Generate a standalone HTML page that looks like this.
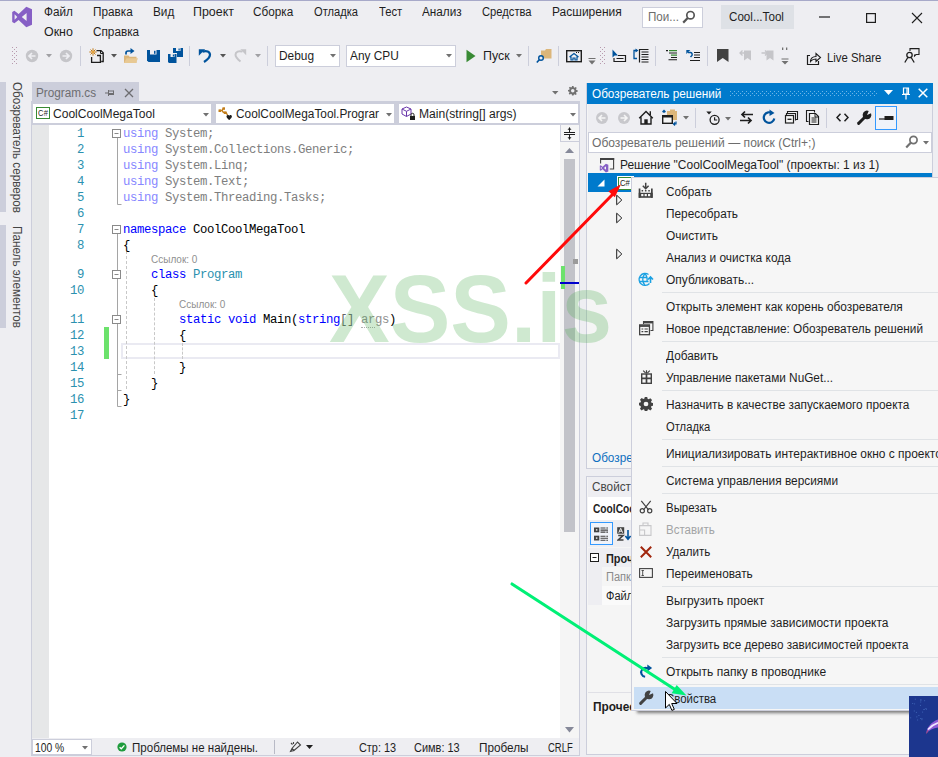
<!DOCTYPE html>
<html><head><meta charset="utf-8">
<style>
html,body{margin:0;padding:0;}
body{width:938px;height:757px;overflow:hidden;background:#EEEEF2;position:relative;font-family:"Liberation Sans",sans-serif;font-size:12px;color:#1E1E1E;}
.a{position:absolute;}
.t{position:absolute;white-space:nowrap;line-height:16px;transform-origin:0 50%;transform:scaleX(var(--s,.94));}
.mn{font-size:12.5px;color:#1E1E1E;}
.code{font-family:"Liberation Mono",monospace;font-size:12.300px;letter-spacing:-0.380px;line-height:16px;white-space:pre;position:absolute;color:#000;margin-top:1px;}
.ln{font-family:"Liberation Mono",monospace;font-size:12.300px;letter-spacing:-0.380px;line-height:16px;position:absolute;color:#2B91AF;width:30px;text-align:right;left:54px;margin-top:1px;}
.fkw{color:#8787FF}.fid{color:#7E7E7E}.kw{color:#0000FF}.ty{color:#2B91AF}.dim{color:#8F8F8F}
.cl{position:absolute;font-size:10px;color:#8F8F8F;white-space:nowrap;line-height:12px;}
.mi{position:absolute;left:666px;white-space:nowrap;font-size:12.5px;line-height:16px;color:#1E1E1E;transform-origin:0 50%;transform:scaleX(var(--s,.937));margin-top:1px;}
.sep{position:absolute;left:662px;width:276px;height:1px;background:#E0E3E6;}
.vsep{position:absolute;width:1px;background:#CCCEDB;}
</style></head><body>

<!-- ===== window top border ===== -->
<div class="a" style="left:0;top:0;width:938px;height:1px;background:#A7A9C9"></div>

<!-- ===== MENU ===== -->
<div id="menu">
<svg class="a" style="left:11px;top:6px" width="22" height="22" viewBox="0 0 22 22"><path fill="#865FC5" d="M15.300 0.800 21 3.200v15.600l-5.700 2.400-7.700-7.300-4.200 3.300-2.200-1.100V5.900l2.200-1.100 4.200 3.300zM3.600 8.300v5.400L6.300 11zm12 -1.300L10.800 11l4.800 4z"/></svg>
<span class="t mn" style="left:44px;top:4px">Файл</span>
<span class="t mn" style="left:93px;top:4px">Правка</span>
<span class="t mn" style="left:153px;top:4px">Вид</span>
<span class="t mn" style="left:193px;top:4px;--s:0.995">Проект</span>
<span class="t mn" style="left:253px;top:4px">Сборка</span>
<span class="t mn" style="left:314px;top:4px;--s:0.892">Отладка</span>
<span class="t mn" style="left:379px;top:4px;--s:0.9">Тест</span>
<span class="t mn" style="left:422px;top:4px">Анализ</span>
<span class="t mn" style="left:482px;top:4px;--s:0.895">Средства</span>
<span class="t mn" style="left:552px;top:4px;--s:0.96">Расширения</span>
<span class="t mn" style="left:44px;top:24px;--s:0.995">Окно</span>
<span class="t mn" style="left:93px;top:24px">Справка</span>
</div>

<!-- ===== TOOLBAR placeholder ===== -->
<div id="toolbar">
<!-- title area -->
<div class="a" style="left:642px;top:7px;width:61px;height:21px;background:#fff;border:1px solid #CCCEDB;box-sizing:border-box"></div>
<span class="t" style="left:648px;top:9px;font-size:12.500px;color:#6D6D6D;--s:.93" id="srch">Пои...</span>
<svg class="a" style="left:682px;top:10px" width="14" height="14" viewBox="0 0 14 14"><circle cx="8.500" cy="5.200" r="3.700" stroke="#555" stroke-width="1.700" fill="none"/><path d="M6 7.800 1.200 12.600" stroke="#555" stroke-width="2.200"/></svg>
<div class="a" style="left:721px;top:5px;width:73px;height:24px;background:#DEE1E6"></div>
<span class="t" style="left:729px;top:9px;font-size:12.500px;--s:.93" id="badge">Cool...Tool</span>
<svg class="a" style="left:819px;top:16px" width="12" height="2" viewBox="0 0 12 2"><path d="M0 1h11" stroke="#1E1E1E" stroke-width="1.200"/></svg>
<svg class="a" style="left:865px;top:12px" width="12" height="12" viewBox="0 0 12 12"><rect x="1.600" y="1.600" width="8.800" height="8.800" fill="none" stroke="#1E1E1E" stroke-width="1.200"/></svg>
<svg class="a" style="left:911px;top:12px" width="12" height="12" viewBox="0 0 12 12"><path d="M1 1l10 10M11 1 1 11" stroke="#1E1E1E" stroke-width="1.100"/></svg>

<!-- grip -->
<div class="a" style="left:12px;top:47px;width:6px;height:17px;background-image:radial-gradient(circle at 0.500px 0.500px,#B89AAE 0.600px,transparent 0.800px),radial-gradient(circle at 2.500px 2.500px,#B89AAE 0.600px,transparent 0.800px);background-size:4px 4px"></div>
<!-- back/forward -->
<svg class="a" style="left:25px;top:49px" width="14" height="14" viewBox="0 0 14 14"><circle cx="7" cy="7" r="6.200" fill="#C5C5C9"/><path d="M10.500 7H4.500M7 4 4 7l3 3" stroke="#EEEEF2" stroke-width="1.700" fill="none"/></svg>
<svg class="a" style="left:46px;top:54px" width="6" height="4" viewBox="0 0 6 4"><path d="M0 0h6L3 3.500z" fill="#A0A0A4"/></svg>
<svg class="a" style="left:59px;top:49px" width="14" height="14" viewBox="0 0 14 14"><circle cx="7" cy="7" r="6.200" fill="#C5C5C9"/><path d="M3.500 7h6M7 4l3 3-3 3" stroke="#EEEEF2" stroke-width="1.700" fill="none"/></svg>
<div class="vsep" style="left:80px;top:46px;height:20px"></div>
<!-- new item -->
<svg class="a" style="left:89px;top:48px" width="16" height="16" viewBox="0 0 16 16"><path d="M7.500 2.600h4.500l2.200 2.200v8.700h-2" stroke="#1E1E1E" stroke-width="1.300" fill="none"/><path d="M11.500 2.600v2.900h2.700" stroke="#1E1E1E" stroke-width="1" fill="none"/><path d="M2.600 9v5.400h8.800V7.500H8" stroke="#1E1E1E" stroke-width="1.300" fill="none"/><path d="M4 0.300v7.400M0.300 4h7.400M1.500 1.500l5 5M6.500 1.500l-5 5" stroke="#C27D1A" stroke-width="1"/><circle cx="4" cy="4" r="1.300" fill="#E8A33A"/></svg>
<svg class="a" style="left:111px;top:54px" width="6" height="4" viewBox="0 0 6 4"><path d="M0 0h6L3 3.500z" fill="#555"/></svg>
<!-- open -->
<svg class="a" style="left:123px;top:48px" width="16" height="16" viewBox="0 0 16 16"><path d="M1 7.500h4.500l1 1.300h7V15H1z" fill="#DCB67A"/><path d="M3.500 10.300h11.500L13 15H1z" fill="#E8C994"/><path d="M3 6.500V5a2 2 0 0 1 2-2H8.500" stroke="#00539C" stroke-width="1.700" fill="none"/><path d="M7.500 0 11.500 3 7.500 6z" fill="#00539C"/></svg>
<!-- save -->
<svg class="a" style="left:147px;top:50px" width="13" height="12" viewBox="0 0 13 12"><path d="M0 0h13v12H1.500L0 10.500z" fill="#00539C"/><rect x="3" y="0" width="6.500" height="4.500" fill="#EEEEF2"/><rect x="7" y="0.800" width="1.500" height="3" fill="#00539C"/></svg>
<!-- save all -->
<svg class="a" style="left:168px;top:48px" width="15" height="15" viewBox="0 0 15 15"><path d="M5 0h10v9H9V5H5z" fill="#00539C"/><rect x="8" y="0" width="4.500" height="3" fill="#EEEEF2"/><rect x="10.500" y="0.500" width="1.200" height="2" fill="#00539C"/><path d="M0 6h8.500v9H1L0 14z" fill="#00539C"/><rect x="2.500" y="6" width="4" height="3" fill="#EEEEF2"/><rect x="4.800" y="6.500" width="1.200" height="2" fill="#00539C"/></svg>
<div class="vsep" style="left:189px;top:46px;height:20px"></div>
<!-- undo -->
<svg class="a" style="left:198px;top:48px" width="14" height="15" viewBox="0 0 14 15"><path d="M4.500 3.600C8.500 2.300 12 3.500 12 6.800 12 9.800 9 12 6 14" stroke="#00539C" stroke-width="2.200" fill="none"/><path d="M0.800 1.300h6.400L0.800 7.700z" fill="#00539C"/></svg>
<svg class="a" style="left:220px;top:54px" width="6" height="4" viewBox="0 0 6 4"><path d="M0 0h6L3 3.500z" fill="#555"/></svg>
<!-- redo disabled -->
<svg class="a" style="left:234px;top:48px" width="13" height="15" viewBox="0 0 13 15"><path d="M8.500 3.600C4.800 2.500 1.500 3.600 1.500 6.800 1.500 9.500 4 11.500 6.500 13.500" stroke="#C5C5C9" stroke-width="2" fill="none"/><path d="M12.200 1.300H6.300l5.900 6z" fill="#C5C5C9"/></svg>
<svg class="a" style="left:255px;top:54px" width="6" height="4" viewBox="0 0 6 4"><path d="M0 0h6L3 3.500z" fill="#A0A0A4"/></svg>
<div class="vsep" style="left:267px;top:46px;height:20px"></div>
<!-- Debug combo -->
<div class="a" style="left:275px;top:45px;width:65px;height:22px;background:#fff;border:1px solid #CCCEDB;box-sizing:border-box"></div>
<span class="t" style="left:279px;top:48px;font-size:12.500px;--s:.95" id="dbg">Debug</span>
<svg class="a" style="left:330px;top:54px" width="6" height="4" viewBox="0 0 6 4"><path d="M0 0h6L3 3.500z" fill="#717171"/></svg>
<div class="a" style="left:346px;top:45px;width:110px;height:22px;background:#fff;border:1px solid #CCCEDB;box-sizing:border-box"></div>
<span class="t" style="left:350px;top:48px;font-size:12.500px;--s:.95" id="cpu">Any CPU</span>
<svg class="a" style="left:446px;top:54px" width="6" height="4" viewBox="0 0 6 4"><path d="M0 0h6L3 3.500z" fill="#717171"/></svg>
<!-- play -->
<svg class="a" style="left:466px;top:49px" width="10" height="14" viewBox="0 0 10 14"><path d="M0.500 0.800v12.400L9.500 7z" fill="#388A34"/></svg>
<span class="t" style="left:483px;top:48px;font-size:12.500px;--s:.99" id="run">Пуск</span>
<svg class="a" style="left:516px;top:54px" width="6" height="4" viewBox="0 0 6 4"><path d="M0 0h6L3 3.500z" fill="#717171"/></svg>
<div class="vsep" style="left:528px;top:46px;height:20px"></div>
<!-- find in files -->
<svg class="a" style="left:536px;top:48px" width="16" height="16" viewBox="0 0 16 16"><path d="M5 2.500h4l1-1.500h5.500v9.500H5z" fill="#DCB67A"/><circle cx="5" cy="10" r="2.300" stroke="#00539C" stroke-width="1.400" fill="#EEEEF2"/><path d="M3.300 11.700 0.800 14.500" stroke="#00539C" stroke-width="1.700"/></svg>
<div class="vsep" style="left:558px;top:46px;height:20px"></div>
<!-- home window -->
<svg class="a" style="left:566px;top:50px" width="16" height="13" viewBox="0 0 16 13"><rect x="0.700" y="0.700" width="14.600" height="11" fill="#EEEEF2" stroke="#1E1E1E" stroke-width="1.400"/><path d="M10 2.500h1M12 2.500h1" stroke="#1E1E1E" stroke-width="1"/><path d="M3.500 7 8 3.500 12.500 7M5 6.500V10h2V8h2v2h2V6.500" stroke="#00539C" stroke-width="1.200" fill="none"/></svg>
<svg class="a" style="left:588px;top:58px" width="8" height="7" viewBox="0 0 8 7"><path d="M0.500 0.500h7" stroke="#717171" stroke-width="1"/><path d="M0.500 2.500h7L4 6.500z" fill="#717171"/></svg>
<div class="a" style="left:600px;top:47px;width:6px;height:17px;background-image:radial-gradient(circle at 0.500px 0.500px,#B89AAE 0.600px,transparent 0.800px),radial-gradient(circle at 2.500px 2.500px,#B89AAE 0.600px,transparent 0.800px);background-size:4px 4px"></div>
<!-- cursor box -->
<svg class="a" style="left:612px;top:49px" width="15" height="14" viewBox="0 0 15 14"><path d="M0.500 0.500v8l2.200-2 3.300 0z" fill="#00539C"/><path d="M2 9v3.500h11.500v-6H6" stroke="#1E1E1E" stroke-width="1.200" fill="none"/><path d="M4.500 9.500h7" stroke="#1E1E1E" stroke-width="1"/></svg>
<!-- doc lines -->
<svg class="a" style="left:633px;top:48px" width="16" height="15" viewBox="0 0 16 15"><path d="M4 2.500H1v8h3" stroke="#00539C" stroke-width="1.300" fill="none"/><path d="M2.500 0.500 5.500 2.500 2.500 4.500z" fill="#00539C"/><path d="M6.500 14.500V1.500h9" stroke="#1E1E1E" stroke-width="1.200" fill="none"/><path d="M8.500 4h7M8.500 6.500h7M8.500 9h7M8.500 11.500h7M8.500 14h7" stroke="#1E1E1E" stroke-width="1"/></svg>
<div class="vsep" style="left:655px;top:46px;height:20px"></div>
<!-- comment lines -->
<svg class="a" style="left:666px;top:50px" width="11" height="11" viewBox="0 0 11 11"><path d="M0 0.700h2" stroke="#1E1E1E" stroke-width="1.200"/><path d="M3 0.700h8M5 5.200h6" stroke="#388A34" stroke-width="1.300"/><path d="M3 3h8M5 7.500h6M2.500 9.800h8.500" stroke="#1E1E1E" stroke-width="1.100"/></svg>
<!-- uncomment -->
<svg class="a" style="left:686px;top:49px" width="14" height="13" viewBox="0 0 14 13"><path d="M2 3.500h2.500a2 2 0 0 1 1 3.500L4.500 8" stroke="#00539C" stroke-width="1.500" fill="none"/><path d="M0.300 1h4L0.300 5z" fill="#00539C"/><path d="M8 3.500h6M8 6h6M8 8.500h6M4 11.500h10" stroke="#1E1E1E" stroke-width="1.200"/></svg>
<div class="vsep" style="left:707px;top:46px;height:20px"></div>
<!-- bookmark -->
<svg class="a" style="left:717px;top:49px" width="12" height="13" viewBox="0 0 12 13"><path d="M0 0h11.500v13L5.750 9 0 13z" fill="#424242"/></svg>
<svg class="a" style="left:739px;top:49px" width="13" height="12" viewBox="0 0 13 12"><path d="M5 1.500h7v10l-3.500-2.500L5 11.500z" fill="#C5C5C9"/><path d="M7 4H1M3.500 1.500 1 4l2.500 2.500" stroke="#C5C5C9" stroke-width="1.300" fill="none"/></svg>
<svg class="a" style="left:761px;top:49px" width="13" height="12" viewBox="0 0 13 12"><path d="M5.500 1.500h7v10L9 9l-3.500 2.500z" fill="#C5C5C9"/><path d="M0.500 4h6M4 1.500 6.500 4 4 6.500" stroke="#C5C5C9" stroke-width="1.300" fill="none"/></svg>
<!-- overflow -->
<svg class="a" style="left:781px;top:47px" width="8" height="18" viewBox="0 0 8 18"><rect x="1" y="0.500" width="1.300" height="2.500" fill="#717171"/><rect x="5" y="0.500" width="1.300" height="2.500" fill="#717171"/><path d="M0.500 12h7" stroke="#717171" stroke-width="1"/><path d="M0.500 14h7L4 17.500z" fill="#717171"/></svg>
<!-- live share -->
<svg class="a" style="left:806px;top:51px" width="16" height="15" viewBox="0 0 16 15"><path d="M4 4.500H1.500v9h11V10" stroke="#1E1E1E" stroke-width="1.200" fill="none"/><path d="M4.500 10.500c0-3 2-5 5.500-5V2.500L14.500 6.500 10 10.500V8c-2.500 0-4 .5-5.500 2.500z" stroke="#1E1E1E" stroke-width="1.100" fill="none"/></svg>
<span class="t" style="left:827px;top:49.700px;font-size:12.500px;--s:.91" id="live">Live Share</span>
<!-- feedback -->
<svg class="a" style="left:904px;top:48px" width="16" height="16" viewBox="0 0 16 16"><path d="M6 3V0.600h9V6.500h-3l-1.500 1.500V6.500" stroke="#1E1E1E" stroke-width="1.100" fill="none"/><circle cx="5.500" cy="7" r="2.700" stroke="#1E1E1E" stroke-width="1.300" fill="none"/><path d="M0.800 14.500 3.800 9.500M10.200 14.500 7.200 9.500" stroke="#1E1E1E" stroke-width="1.300" fill="none"/></svg>
</div>

<!-- ===== LEFT STRIP ===== -->
<div id="leftstrip"></div>

<!-- ===== EDITOR ===== -->
<div id="editor">
<!-- left auto-hide strip -->
<div class="a" style="left:0;top:82px;width:6px;height:130px;background:#CCCEDB"></div>
<div class="a" style="left:0;top:225px;width:6px;height:103px;background:#CCCEDB"></div>
<div class="t" style="left:24px;top:82px;font-size:12.5px;color:#444;transform:rotate(90deg) scaleX(.935);transform-origin:0 0;line-height:14px" id="vt1">Обозреватель серверов</div>
<div class="t" style="left:24px;top:225.5px;font-size:12.5px;color:#444;transform:rotate(90deg) scaleX(.94);transform-origin:0 0;line-height:14px" id="vt2">Панель элементов</div>

<!-- doc tab -->
<div class="a" style="left:32px;top:82px;width:107px;height:20px;background:#CCCEDB"></div>
<div class="a" style="left:31px;top:101px;width:549px;height:3px;background:#CCCEDB"></div>
<span class="t" style="left:36px;top:85px;font-size:12.5px;color:#6D6D70" id="tabname">Program.cs</span>
<svg class="a" style="left:105px;top:88px" width="10" height="10" viewBox="0 0 10 10"><path d="M0 5h3M3.5 2v6M3.5 3h5M3.5 6.5h5M8.5 2.5v4.5" stroke="#6D6D70" stroke-width="1" fill="none"/><rect x="4" y="5" width="4" height="1.5" fill="#6D6D70"/></svg>
<svg class="a" style="left:124px;top:88px" width="10" height="10" viewBox="0 0 10 10"><path d="M1 1l8 8M9 1l-8 8" stroke="#6D6D70" stroke-width="1.3" fill="none"/></svg>
<!-- tab well right icons -->
<svg class="a" style="left:552px;top:91px" width="6.500" height="4" viewBox="0 0 8 5"><path d="M0 0h8l-4 4.5z" fill="#717171"/></svg>
<svg class="a" style="left:568px;top:86px" width="9.500" height="9.500" viewBox="0 0 12 12"><path fill="#717171" fill-rule="evenodd" d="M5 0h2l.3 1.6 1.1.5L9.8 1.2l1.3 1.4-1 1.3.5 1.1 1.6.3v2l-1.6.3-.5 1.1 1 1.3-1.400 1.400-1.300-1-1.100.5L7 12H5l-.3-1.600-1.100-.5-1.300 1L.900 9.500l1-1.300-.5-1.100L0 6.800V5l1.600-.3.5-1.100-1-1.300L2.500.900l1.300 1 1.100-.5zM6 3.800a2.200 2.200 0 1 0 0 4.400 2.200 2.200 0 0 0 0-4.400z"/></svg>

<!-- nav bar -->
<div class="a" style="left:31px;top:104px;width:549px;height:21px;background:#CCCEDB"></div>
<div class="a" style="left:33px;top:104px;width:178px;height:19px;background:#fff"></div>
<div class="a" style="left:216px;top:104px;width:178px;height:19px;background:#fff"></div>
<div class="a" style="left:399px;top:104px;width:179px;height:19px;background:#fff"></div>
<!-- combo 1 -->
<div class="a" style="left:36px;top:107px;width:14px;height:12px;border:1px solid #388A34;box-sizing:border-box;background:#fff"></div>
<span class="t" style="left:37.800px;top:105px;font-size:9px;color:#2A2A2A;letter-spacing:0.200px;--s:.84">C#</span>
<span class="t" style="left:53px;top:106px;font-size:12.5px;--s:.9645" id="cb1">CoolCoolMegaTool</span>
<svg class="a" style="left:203px;top:113px" width="6" height="3.500" viewBox="0 0 7 4"><path d="M0 0h7L3.500 4z" fill="#717171"/></svg>
<!-- combo 2 -->
<svg class="a" style="left:218px;top:107px" width="15" height="14" viewBox="0 0 15 14"><path d="M1 3.500h3l1.500 2h3M4 3.500 5.500 1M8 5.500l1.500 2.500" stroke="#C27D1A" stroke-width="1.400" fill="none"/><rect x="0.500" y="2.500" width="2.500" height="2.500" fill="#C27D1A"/><rect x="4.500" y="0.300" width="2.500" height="2.500" fill="#C27D1A"/><rect x="6" y="4.500" width="2.500" height="2.500" fill="#C27D1A"/><path d="M8.500 9.500c0-2 2.500-2 2.700-.5.200-1.500 2.700-1.500 2.700.5 0 1.500-2.700 3.500-2.700 3.500S8.500 11 8.500 9.500z" fill="#1E1E1E"/></svg>
<span class="t" style="left:236px;top:106px;font-size:12.5px;--s:.948" id="cb2">CoolCoolMegaTool.Prograr</span>
<svg class="a" style="left:386px;top:113px" width="6" height="3.500" viewBox="0 0 7 4"><path d="M0 0h7L3.500 4z" fill="#717171"/></svg>
<!-- combo 3 -->
<svg class="a" style="left:401px;top:106px" width="16" height="15" viewBox="0 0 16 15"><path d="M5.500 1 10 3v5L5.500 10.500 1 8V3z M1 3l4.500 2.300L10 3M5.500 5.300v5" stroke="#6936AA" stroke-width="1" fill="none"/><rect x="9" y="10" width="5" height="4" fill="#1E1E1E"/><path d="M10 10V8.800a1.500 1.500 0 0 1 3 0V10" stroke="#1E1E1E" stroke-width="1" fill="none"/></svg>
<span class="t" style="left:419px;top:106px;font-size:12.5px;--s:.969" id="cb3">Main(string[] args)</span>
<svg class="a" style="left:570px;top:113px" width="6" height="3.500" viewBox="0 0 7 4"><path d="M0 0h7L3.500 4z" fill="#717171"/></svg>

<!-- editor body -->
<div class="a" style="left:31px;top:125px;width:549px;height:631px;background:#CCCEDB"></div><div class="a" style="left:32px;top:125px;width:547px;height:613px;background:#fff"></div>
<div class="a" style="left:32px;top:125px;width:17px;height:613px;background:#E6E7E8"></div>
<!-- vertical scrollbar -->
<div class="a" style="left:560px;top:125px;width:19px;height:613px;background:#F5F5F5"></div>
<div class="a" style="left:564px;top:159px;width:11px;height:373px;background:#C2C3C9"></div><svg class="a" style="left:565px;top:148px" width="9" height="5" viewBox="0 0 9 5"><path d="M0 5h9L4.500 0z" fill="#868999"/></svg>
<!-- split button -->
<div class="a" style="left:560px;top:125px;width:19px;height:17px;background:#CCCEDB"></div><div class="a" style="left:561px;top:125px;width:18px;height:16px;background:#F5F5F5"></div>
<svg class="a" style="left:564px;top:127px" width="11" height="13" viewBox="0 0 11 13"><path d="M0 5.500h11M0 7.500h11M5.500 0.500v4.500M5.500 8v4.500" stroke="#1E1E1E" stroke-width="1" fill="none"/><path d="M3.500 2.800 5.500 0.500 7.500 2.800zM3.500 10.200 5.500 12.500 7.500 10.200z" fill="#1E1E1E"/></svg>
<!-- scrollbar marks -->
<div class="a" style="left:561px;top:266px;width:4px;height:23px;background:#6CE26C"></div>
<div class="a" style="left:573px;top:259px;width:5px;height:5px;background:#9B9B9B"></div>
<div class="a" style="left:560px;top:282px;width:19px;height:2px;background:#0000CD"></div>
<svg class="a" style="left:565px;top:727px" width="9" height="6" viewBox="0 0 9 6"><path d="M0 0h9L4.500 5.500z" fill="#868999"/></svg>

<!-- change bar -->
<div class="a" style="left:104px;top:327px;width:5px;height:32px;background:#6CE26C"></div>
<!-- current line -->
<div class="a" style="left:121px;top:343px;width:439px;height:16px;border:2px solid #EAEAF2;box-sizing:border-box"></div>

<!-- outlining -->
<svg class="a" style="left:110px;top:125px" width="30" height="300" viewBox="0 0 30 300">
<g stroke="#A5A5A5" stroke-width="1" fill="none">
<path d="M7.500 13v66.500h4"/>
<path d="M7.500 109v172.500h4"/>
<path d="M7.500 249.500h4M7.500 265.500h4"/>
<path d="M16.500 126v138" stroke-dasharray="3 2" stroke="#C8C8C8"/>
</g>
<g stroke="#8A8A8A" stroke-width="1" fill="#fff">
<rect x="2.500" y="4.500" width="8" height="8"/><path d="M4.500 8.500h4"/>
<rect x="2.500" y="100.500" width="8" height="8"/><path d="M4.500 104.500h4"/>
<rect x="2.500" y="145.500" width="8" height="8"/><path d="M4.500 149.500h4"/>
<rect x="2.500" y="190.500" width="8" height="8"/><path d="M4.500 194.500h4"/>
</g>
</svg>
<!-- indent guides -->
<div class="a" style="left:154px;top:298px;width:0;height:76px;border-left:1px dashed #C8C8C8"></div>
<div class="a" style="left:182px;top:343px;width:0;height:16px;border-left:1px dashed #C8C8C8"></div>

<!-- line numbers -->
<div class="ln" style="top:125px">1</div>
<div class="ln" style="top:141px">2</div>
<div class="ln" style="top:157px">3</div>
<div class="ln" style="top:173px">4</div>
<div class="ln" style="top:189px">5</div>
<div class="ln" style="top:205px">6</div>
<div class="ln" style="top:221px">7</div>
<div class="ln" style="top:237px">8</div>
<div class="ln" style="top:266px">9</div>
<div class="ln" style="top:282px">10</div>
<div class="ln" style="top:311px">11</div>
<div class="ln" style="top:327px">12</div>
<div class="ln" style="top:343px">13</div>
<div class="ln" style="top:359px">14</div>
<div class="ln" style="top:375px">15</div>
<div class="ln" style="top:391px">16</div>
<div class="ln" style="top:407px">17</div>

<!-- code -->
<div class="code" style="left:123px;top:125px"><span class="fkw">using</span> <span class="fid">System;</span></div>
<div class="code" style="left:123px;top:141px"><span class="fkw">using</span> <span class="fid">System.Collections.Generic;</span></div>
<div class="code" style="left:123px;top:157px"><span class="fkw">using</span> <span class="fid">System.Linq;</span></div>
<div class="code" style="left:123px;top:173px"><span class="fkw">using</span> <span class="fid">System.Text;</span></div>
<div class="code" style="left:123px;top:189px"><span class="fkw">using</span> <span class="fid">System.Threading.Tasks;</span></div>
<div class="code" style="left:123px;top:221px"><span class="kw">namespace</span> CoolCoolMegaTool</div>
<div class="code" style="left:123px;top:237px">{</div>
<div class="cl" style="left:151px;top:254px">Ссылок: 0</div>
<div class="code" style="left:151px;top:266px"><span class="kw">class</span> <span class="ty">Program</span></div>
<div class="code" style="left:151px;top:282px">{</div>
<div class="cl" style="left:179px;top:299px">Ссылок: 0</div>
<div class="code" style="left:179px;top:311px"><span class="kw">static</span> <span class="kw">void</span> Main(<span class="kw">string</span><span style="color:#666">[]</span> <span class="dim" style="border-bottom:1px dotted #B0B0B0">ar</span><span class="dim">gs</span>)</div>
<div class="code" style="left:179px;top:327px">{</div>
<div class="code" style="left:179px;top:359px">}</div>
<div class="code" style="left:151px;top:375px">}</div>
<div class="code" style="left:123px;top:391px">}</div>

<!-- bottom status strip of editor -->
<div class="a" style="left:32px;top:738px;width:547px;height:17px;background:#EEEEF2"></div>
<div class="a" style="left:32px;top:739px;width:60px;height:16px;background:#fff;border:1px solid #CCCEDB;box-sizing:border-box"></div>
<span class="t" style="left:35px;top:740px;font-size:12px;--s:.86">100 %</span>
<svg class="a" style="left:82px;top:746px" width="6" height="4" viewBox="0 0 6 4"><path d="M0 0h6L3 3.500z" fill="#717171"/></svg>
<svg class="a" style="left:117px;top:742px" width="10" height="10" viewBox="0 0 10 10"><circle cx="5" cy="5" r="4.600" fill="#1F9B3D"/><path d="M2.600 5.200 4.300 6.800 7.400 3.400" stroke="#fff" stroke-width="1.300" fill="none"/></svg>
<span class="t" style="left:132px;top:740px;font-size:12.5px;--s:.923" id="st1">Проблемы не найдены.</span>
<div class="vsep" style="left:274px;top:740px;height:14px;background:#B8BAC6"></div>
<svg class="a" style="left:289px;top:741px" width="13" height="12" viewBox="0 0 13 12"><path d="M8.500 1 3 7.500l2 2L11.500 4zM3 7.500 1.500 10.500 5 9.500M2 2l1.500 1.500M4.500 1v2" stroke="#424242" stroke-width="1.100" fill="none"/></svg>
<svg class="a" style="left:306px;top:745px" width="7" height="4" viewBox="0 0 7 4"><path d="M0 0h7L3.500 4z" fill="#1E1E1E"/></svg>
<span class="t" style="left:359px;top:740px;font-size:12px;--s:.908" id="st2">Стр: 13</span>
<span class="t" style="left:414px;top:740px;font-size:12px;--s:.914" id="st3">Симв: 13</span>
<span class="t" style="left:479px;top:740px;font-size:12.5px" id="st4">Пробелы</span>
<span class="t" style="left:548px;top:740px;font-size:12px;--s:.79" id="st5">CRLF</span>
</div>

<!-- ===== SOLUTION EXPLORER ===== -->
<div id="solex">
<!-- panel bg -->
<div class="a" style="left:586px;top:83px;width:347px;height:386px;background:#F5F5F5;border:1px solid #CCCEDB;box-sizing:border-box"></div>
<!-- title -->
<div class="a" style="left:587px;top:83px;width:346px;height:21px;background:#007ACC"></div>
<span class="t" style="left:592px;top:86px;font-size:12.5px;color:#fff" id="setitle">Обозреватель решений</span>
<svg class="a" style="left:730px;top:91px" width="147" height="5" viewBox="0 0 147 5"><defs><pattern id="dp" width="4" height="4" patternUnits="userSpaceOnUse"><rect x="0" y="0" width="1" height="1" fill="#6DB5E8"/><rect x="2" y="2" width="1" height="1" fill="#6DB5E8"/></pattern></defs><rect width="147" height="5" fill="url(#dp)"/></svg>
<svg class="a" style="left:884px;top:90px" width="9" height="6" viewBox="0 0 9 6"><path d="M0 0h9L4.500 5z" fill="#fff"/></svg>
<svg class="a" style="left:901px;top:87px" width="10" height="13" viewBox="0 0 10 13"><path d="M2.500 1h5v6h-5zM6 1v6M1 7.500h8M5 7.500V12.500" stroke="#fff" stroke-width="1.200" fill="none"/></svg>
<svg class="a" style="left:918px;top:88px" width="10" height="10" viewBox="0 0 10 10"><path d="M0.700 0.700 9.300 9.300M9.300 0.700 0.700 9.300" stroke="#fff" stroke-width="1.500"/></svg>
<!-- toolbar -->
<div class="a" style="left:588px;top:104px;width:344px;height:28px;background:#EEEEF2"></div>
<svg class="a" style="left:595px;top:111px" width="14" height="14" viewBox="0 0 14 14"><circle cx="7" cy="7" r="6" fill="#C8C8CC"/><path d="M10.500 7H4.500M7 4 4 7l3 3" stroke="#F5F5F5" stroke-width="1.600" fill="none"/></svg>
<svg class="a" style="left:617px;top:111px" width="14" height="14" viewBox="0 0 14 14"><circle cx="7" cy="7" r="6" fill="#C8C8CC"/><path d="M3.500 7h6M7 4l3 3-3 3" stroke="#F5F5F5" stroke-width="1.600" fill="none"/></svg>
<svg class="a" style="left:638px;top:110px" width="16" height="15" viewBox="0 0 16 15"><path d="M1.200 8.200 8 1.400l6.800 6.800M3 7.300V14h10V7.300M12.300 1.300v3.800" stroke="#1E1E1E" stroke-width="1.400" fill="none"/><rect x="6.300" y="9.300" width="3.400" height="4.700" fill="#1E1E1E"/></svg>
<svg class="a" style="left:661px;top:109px" width="18" height="17" viewBox="0 0 18 17"><rect x="6" y="2" width="10" height="9" fill="#DCB67A"/><rect x="9" y="0.500" width="5" height="2" fill="#DCB67A"/><rect x="1.700" y="6.700" width="9.600" height="7.600" fill="#F5F5F5" stroke="#1E1E1E" stroke-width="1.400"/><rect x="1" y="6" width="11" height="2.500" fill="#1E1E1E"/><path d="M3 4V1.500M1.500 3 3 1.300 4.500 3" stroke="#00539C" stroke-width="1.200" fill="none"/><path d="M15 12.500v2.500h-2M14 13.500 12.500 15 14 16.500" stroke="#00539C" stroke-width="1.200" fill="none"/></svg>
<svg class="a" style="left:683px;top:116px" width="6" height="3.500" viewBox="0 0 7 4"><path d="M0 0h7L3.500 4z" fill="#717171"/></svg>
<div class="vsep" style="left:695px;top:108px;height:20px"></div>
<svg class="a" style="left:706px;top:109px" width="18" height="17" viewBox="0 0 18 17"><circle cx="8.600" cy="10.800" r="4.500" stroke="#1E1E1E" stroke-width="1.300" fill="none"/><path d="M8.600 8.300v2.700h2.600" stroke="#1E1E1E" stroke-width="1.200" fill="none"/><path d="M0.300 2.600h5.400L3 5.600z" fill="#1E1E1E"/></svg>
<svg class="a" style="left:725px;top:117px" width="6" height="3.500" viewBox="0 0 7 4"><path d="M0 0h7L3.500 4z" fill="#717171"/></svg>
<svg class="a" style="left:739px;top:110px" width="15" height="15" viewBox="0 0 15 15"><path d="M14 4.500H3M6 1.500 3 4.500l3 3M1 10.500h11M9 7.500l3 3-3 3" stroke="#1E1E1E" stroke-width="1.700" fill="none"/></svg>
<svg class="a" style="left:761px;top:109px" width="16" height="17" viewBox="0 0 16 17"><path d="M11.500 4.500A5.300 5.300 0 1 0 13.300 9.500" stroke="#00539C" stroke-width="2.200" fill="none"/><path d="M8.500 0.500 13.500 4 8.500 7z" fill="#00539C"/></svg>
<svg class="a" style="left:784px;top:110px" width="15" height="15" viewBox="0 0 15 15"><path d="M3.500 3V1.500h10v8H12M2.500 5V3.500h9v7" stroke="#1E1E1E" stroke-width="1.100" fill="none"/><rect x="1.500" y="5.500" width="8" height="7.500" fill="#F5F5F5" stroke="#1E1E1E" stroke-width="1.200"/><path d="M3.500 9.300h4" stroke="#1E1E1E" stroke-width="1.300"/></svg>
<svg class="a" style="left:805px;top:109px" width="16" height="17" viewBox="0 0 16 17"><path d="M3.500 12.500H1.500v-11h8v2" stroke="#1E1E1E" stroke-width="1.100" fill="none"/><path d="M4.500 4.500h6l3 3v8h-9z" stroke="#1E1E1E" stroke-width="1.200" fill="#F5F5F5"/><path d="M6.500 9h5M6.500 11h5M6.500 13h5M10 4.500V8h3.500" stroke="#1E1E1E" stroke-width="1" fill="none"/></svg>
<div class="vsep" style="left:826px;top:108px;height:20px"></div>
<svg class="a" style="left:836px;top:113px" width="13" height="9" viewBox="0 0 13 9"><path d="M4.500 0.700 1 4.500l3.500 3.800M8.500 0.700 12 4.500 8.500 8.300" stroke="#1E1E1E" stroke-width="1.500" fill="none"/></svg>
<svg class="a" style="left:856px;top:110px" width="16" height="16" viewBox="0 0 16 16"><path d="M2.600 13.400 9.500 6.500" stroke="#1E1E1E" stroke-width="2.900" stroke-linecap="round" fill="none"/><path d="M13.030 4.140A2.200 2.200 0 1 1 11.860 2.970" stroke="#1E1E1E" stroke-width="4.300" fill="none"/></svg>
<div class="a" style="left:875px;top:106px;width:22px;height:24px;background:#F0F3FA;border:1px solid #3399FF;box-sizing:border-box"></div>
<svg class="a" style="left:879px;top:114px" width="15" height="8" viewBox="0 0 15 8"><path d="M0 5h6" stroke="#1E1E1E" stroke-width="1.200"/><rect x="5.500" y="2" width="9" height="4" fill="#1E1E1E"/></svg>
<!-- search box -->
<div class="a" style="left:588px;top:132px;width:344px;height:21px;background:#fff;border:1px solid #CCCEDB;box-sizing:border-box"></div>
<span class="t" style="left:592px;top:135px;font-size:12.5px;color:#6D6D6D;--s:.965" id="sesearch">Обозреватель решений — поиск (Ctrl+;)</span>
<svg class="a" style="left:905px;top:135px" width="14" height="14" viewBox="0 0 14 14"><circle cx="8.500" cy="5" r="3.600" stroke="#717171" stroke-width="1.700" fill="none"/><path d="M6 7.500 1.200 12.500" stroke="#717171" stroke-width="2.200"/></svg>
<svg class="a" style="left:923px;top:141px" width="6" height="4" viewBox="0 0 6 4"><path d="M0 0h6L3 3.500z" fill="#717171"/></svg>
<!-- tree -->
<svg class="a" style="left:599px;top:157px" width="17" height="16" viewBox="0 0 17 16"><path d="M1.600 6.500V1.500h13v10.500h-3.800" stroke="#424242" stroke-width="1.100" fill="none"/><path d="M1 2h14.200" stroke="#424242" stroke-width="2"/><g transform="translate(0.300,6.300) scale(0.430)"><path fill="#865FC5" d="M15.300 0.800 21 3.200v15.600l-5.700 2.400-7.700-7.300-4.200 3.300-2.200-1.100V5.900l2.200-1.100 4.200 3.300zM3.600 8.300v5.400L6.300 11zm12 -1.300L10.800 11l4.800 4z"/></g></svg>
<span class="t" style="left:620px;top:157px;font-size:12.500px;--s:.957" id="sesln">Решение "CoolCoolMegaTool" (проекты: 1 из 1)</span>
<div class="a" style="left:588px;top:173px;width:344px;height:19px;background:#007ACC"></div>
<svg class="a" style="left:597px;top:179px" width="8" height="8" viewBox="0 0 8 8"><path d="M7.500 0.500v7h-7z" fill="#fff"/></svg>
<div class="a" style="left:617px;top:176px;width:17px;height:14px;background:#fff"></div><div class="a" style="left:618px;top:177px;width:16px;height:12.500px;background:#fff;border:1px solid #388A34;box-sizing:border-box"></div>
<span class="t" style="left:620px;top:175px;font-size:9.500px;color:#222;letter-spacing:-0.300px;--s:.82">C#</span>
<svg class="a" style="left:616px;top:194px" width="7" height="12" viewBox="0 0 7 12"><path d="M0.700 1.200v9.600L5.800 6z" stroke="#1E1E1E" stroke-width="1" fill="none"/></svg>
<svg class="a" style="left:616px;top:212px" width="7" height="12" viewBox="0 0 7 12"><path d="M0.700 1.200v9.600L5.800 6z" stroke="#1E1E1E" stroke-width="1" fill="none"/></svg>
<svg class="a" style="left:616px;top:248px" width="7" height="12" viewBox="0 0 7 12"><path d="M0.700 1.200v9.600L5.800 6z" stroke="#1E1E1E" stroke-width="1" fill="none"/></svg>
<!-- bottom tab -->
<span class="t" style="left:592px;top:450px;font-size:12.500px;color:#0E70C0" id="setab">Обозреватель решений</span>
</div>

<!-- ===== PROPERTIES ===== -->
<div id="props">
<div class="a" style="left:586px;top:476px;width:347px;height:279px;background:#F5F5F5;border:1px solid #CCCEDB;box-sizing:border-box"></div>
<div class="a" style="left:588px;top:477px;width:344px;height:20px;background:#EEEEF2"></div>
<span class="t" style="left:592px;top:479px;font-size:12.500px;color:#444" id="prtitle">Свойства</span>
<div class="a" style="left:588px;top:497px;width:344px;height:23px;background:#fff"></div>
<span class="t" style="left:593px;top:501px;font-size:12.500px;font-weight:bold;--s:.815" id="prname">CoolCoolMegaTool</span>
<div class="a" style="left:588px;top:520px;width:344px;height:27px;background:#EEEEF2"></div>
<div class="a" style="left:590px;top:522px;width:23px;height:23px;background:#F0F3FA;border:1px solid #3399FF;box-sizing:border-box"></div>
<svg class="a" style="left:594px;top:527px" width="15" height="15" viewBox="0 0 15 15"><rect x="0" y="0.500" width="5.300" height="4.800" fill="#424242"/><rect x="0" y="8.700" width="5.300" height="4.800" fill="#424242"/><rect x="1.900" y="2.200" width="1.500" height="1.400" fill="#F0F0F0"/><rect x="1.900" y="10.400" width="1.500" height="1.400" fill="#F0F0F0"/><path d="M6.500 1h5M6.500 3.100h7.500M6.500 5.100h5M6.500 9.200h5M6.500 11.300h7.500M6.500 13.300h5" stroke="#424242" stroke-width="1.100"/><path d="M12.300 1h1.700M12.300 5.100h1.700M12.300 9.200h1.700M12.300 13.300h1.700" stroke="#424242" stroke-width="1.100"/></svg>
<svg class="a" style="left:617px;top:527px" width="15" height="14" viewBox="0 0 15 14"><rect x="0.200" y="0.200" width="7" height="6.500" fill="#424242"/><path d="M1.800 5.700 3.700 1.300 5.600 5.700M2.500 4.200h2.400" stroke="#F0F0F0" stroke-width="1" fill="none"/><path d="M1.200 8.400h5L1.200 13h5.300" stroke="#424242" stroke-width="1.500" fill="none"/><path d="M11 3v8.500M8.400 9 11 12.200 13.600 9" stroke="#00539C" stroke-width="1.600" fill="none"/></svg>
<!-- grid -->
<div class="a" style="left:588px;top:548px;width:344px;height:57px;background:#EEEEF2"></div>
<div class="a" style="left:602px;top:567px;width:330px;height:19px;background:#F5F5F5"></div>
<div class="a" style="left:602px;top:586px;width:330px;height:19px;background:#FAFAFA"></div>
<svg class="a" style="left:590px;top:553px" width="9" height="9" viewBox="0 0 9 9"><rect x="0.500" y="0.500" width="8" height="8" fill="#fff" stroke="#1E1E1E"/><path d="M2.500 4.500h4" stroke="#1E1E1E"/></svg>
<span class="t" style="left:606px;top:550.500px;font-size:12.500px;font-weight:bold;--s:.875" id="prcat">Прочее</span>
<span class="t" style="left:606px;top:569px;font-size:12.500px;color:#8A8A8A;--s:.885" id="prp1">Папка проекта</span>
<span class="t" style="left:606px;top:588px;font-size:12.500px;--s:.885" id="prp2">Файл проекта</span>
<div class="a" style="left:588px;top:692px;width:344px;height:1px;background:#E0E0E6"></div>
<span class="t" style="left:593px;top:699px;font-size:12.500px;font-weight:bold;--s:.95" id="prdesc">Прочее</span>
</div>

<!-- ===== CONTEXT MENU ===== -->
<div id="ctx">
<div class="a" style="left:631px;top:177px;width:320px;height:534px;background:#F6F6F6;border:1px solid #CCCEDB;box-sizing:border-box;box-shadow:5px 3px 3px -1px rgba(0,0,0,.5)"></div>
<!-- highlight -->
<div class="a" style="left:634px;top:687px;width:304px;height:22px;background:#C9DEF5"></div>
<!-- items -->
<span class="mi" style="top:183px;--s:0.937" id="m1">Собрать</span>
<span class="mi" style="top:205px;--s:0.945" id="m2">Пересобрать</span>
<span class="mi" style="top:227px;--s:0.954" id="m3">Очистить</span>
<span class="mi" style="top:249px;--s:0.953" id="m4">Анализ и очистка кода</span>
<span class="mi" style="top:271px;--s:0.957" id="m5">Опубликовать...</span>
<div class="sep" style="top:292px"></div>
<span class="mi" style="top:298px;--s:0.949" id="m6">Открыть элемент как корень обозревателя</span>
<span class="mi" style="top:320px;--s:0.9435" id="m7">Новое представление: Обозреватель решений</span>
<div class="sep" style="top:341px"></div>
<span class="mi" style="top:347px;--s:0.945" id="m8">Добавить</span>
<span class="mi" style="top:369px;--s:0.944" id="m9">Управление пакетами NuGet...</span>
<div class="sep" style="top:390px"></div>
<span class="mi" style="top:396px;--s:0.948" id="m10">Назначить в качестве запускаемого проекта</span>
<span class="mi" style="top:418px;--s:0.897" id="m11">Отладка</span>
<div class="sep" style="top:439px"></div>
<span class="mi" style="top:445px;--s:0.956" id="m12">Инициализировать интерактивное окно с проектом</span>
<div class="sep" style="top:466px"></div>
<span class="mi" style="top:472px;--s:0.948" id="m13">Система управления версиями</span>
<div class="sep" style="top:493px"></div>
<span class="mi" style="top:499px;--s:0.916" id="m14">Вырезать</span>
<span class="mi" style="top:521px;color:#A2A4A5;--s:0.92" id="m15">Вставить</span>
<span class="mi" style="top:543px;--s:0.927" id="m16">Удалить</span>
<span class="mi" style="top:565px;--s:0.947" id="m17">Переименовать</span>
<div class="sep" style="top:586px"></div>
<span class="mi" style="top:592px;--s:0.96" id="m18">Выгрузить проект</span>
<span class="mi" style="top:614px;--s:0.958" id="m19">Загрузить прямые зависимости проекта</span>
<span class="mi" style="top:636px;--s:0.937" id="m20">Загрузить все дерево зависимостей проекта</span>
<div class="sep" style="top:657px"></div>
<span class="mi" style="top:663px;--s:0.964" id="m21">Открыть папку в проводнике</span>
<div class="sep" style="top:684px"></div>
<span class="mi" style="top:690px;--s:0.915" id="m22">Свойства</span>
<!-- icons -->
<!-- build -->
<svg class="a" style="left:638px;top:182px" width="16" height="16" viewBox="0 0 16 16"><path d="M7.700 0.800v5.500M4.800 3.800 7.700 6.700 10.600 3.800" stroke="#424242" stroke-width="1.500" fill="none"/><rect x="0.700" y="6.500" width="1.700" height="9.300" fill="#424242"/><rect x="13" y="6.500" width="1.700" height="9.300" fill="#424242"/><rect x="0.700" y="10.800" width="14" height="5" fill="#424242"/><g fill="#424242"><rect x="3.600" y="8" width="1.500" height="1.500"/><rect x="6.950" y="8" width="1.500" height="1.500"/><rect x="10.300" y="8" width="1.500" height="1.500"/></g><g fill="#F6F6F6"><rect x="3.200" y="12" width="2.200" height="2.200"/><rect x="6.600" y="12" width="2.200" height="2.200"/><rect x="10" y="12" width="2.200" height="2.200"/></g></svg>
<!-- publish globe -->
<svg class="a" style="left:638px;top:272px" width="16" height="15" viewBox="0 0 16 15"><g stroke="#1BA1E2" stroke-width="1.300" fill="none"><path d="M11.500 11.500A6 6 0 1 1 10.500 2.500"/><path d="M1.500 5.500h8M1.500 9.500h9M7 1.500c-3 3.500-3 8.500 0 12M7 1.500c2 2.500 2.500 5 2 8"/><path d="M12.500 11V5M10 7.500 12.500 5 15 7.500" stroke-width="1.600"/></g></svg>
<!-- new view -->
<svg class="a" style="left:639px;top:321px" width="15" height="15" viewBox="0 0 15 15"><path d="M4.500 3V0.600h9.400v8.900H11.500" stroke="#424242" stroke-width="1.100" fill="none"/><path d="M4.500 1.600h9.400" stroke="#424242" stroke-width="1.600"/><rect x="0.650" y="3.900" width="9.800" height="9.800" fill="#F6F6F6" stroke="#424242" stroke-width="1.300"/><path d="M0.600 5h10" stroke="#424242" stroke-width="1.800"/><path d="M2.500 8h1.800M5.500 8h3.300M2.500 10.700h1.800M5.500 10.700h3.300" stroke="#424242" stroke-width="1.200"/></svg>
<!-- nuget gift -->
<svg class="a" style="left:641px;top:370px" width="11" height="14" viewBox="0 0 11 14"><path d="M2.200 0.600l2.300 2.300M8.800 0.600 6.500 2.900M5.500 0.300v2.800" stroke="#424242" stroke-width="1.200" fill="none"/><rect x="0.700" y="4" width="9.600" height="9.300" fill="none" stroke="#424242" stroke-width="1.400"/><path d="M5.500 3.500v10M0.500 8.300h10" stroke="#424242" stroke-width="1.700"/></svg>
<!-- gear -->
<svg class="a" style="left:639px;top:397px" width="14" height="14" viewBox="0 0 16 16"><path fill="#424242" fill-rule="evenodd" d="M6.600 0h2.800l.4 2.100 1.300.6 1.800-1.200 2 2-1.200 1.800.6 1.300 2.100.4v2.800l-2.100.4-.6 1.300 1.200 1.800-2 2-1.800-1.200-1.300.6-.4 2.100H6.600l-.4-2.100-1.300-.6-1.800 1.200-2-2 1.200-1.800-.6-1.300L-.4 9.400V6.600l2.100-.4.600-1.300L1.100 3.100l2-2 1.800 1.200 1.300-.6zM8 5.300a2.700 2.700 0 1 0 0 5.400 2.700 2.700 0 0 0 0-5.400z"/></svg>
<!-- cut -->
<svg class="a" style="left:639px;top:500px" width="14" height="14" viewBox="0 0 14 14"><path d="M2.300 0.800 9.500 9.800M11.700 0.800 4.500 9.800" stroke="#424242" stroke-width="1.200" fill="none"/><circle cx="3.300" cy="10.800" r="2.100" stroke="#424242" stroke-width="1.200" fill="none"/><circle cx="10.700" cy="10.800" r="2.100" stroke="#424242" stroke-width="1.200" fill="none"/></svg>
<!-- paste disabled -->
<svg class="a" style="left:639px;top:522px" width="13" height="14" viewBox="0 0 13 14"><path d="M4 3.500V1h5v2.500M0.600 3.600h11.400v9.800H0.600zM0.600 8h5v5.400" stroke="#C8C8CA" stroke-width="1.100" fill="none"/></svg>
<!-- delete -->
<svg class="a" style="left:640px;top:546px" width="12" height="12" viewBox="0 0 12 12"><path d="M0.800 0.800 11.200 11.200M11.200 0.800 0.800 11.200" stroke="#A1260D" stroke-width="2"/></svg>
<!-- rename -->
<svg class="a" style="left:639px;top:568px" width="14" height="10" viewBox="0 0 14 10"><rect x="0.600" y="0.600" width="12.800" height="8.800" fill="none" stroke="#424242" stroke-width="1.100"/><path d="M2.500 2.500h2.400M2.500 7.500h2.400M3.700 2.500v5" stroke="#424242" stroke-width="0.900" fill="none"/></svg>
<!-- open folder arrow -->
<svg class="a" style="left:639px;top:663.500px" width="14" height="14" viewBox="0 0 15 16"><path d="M6.500 14.500A5 5 0 0 1 3 6.500 5.500 5.500 0 0 1 8 4.500h3" stroke="#00539C" stroke-width="2.400" fill="none"/><path d="M9 0.500 14.500 4.500 9 8.500z" fill="#00539C"/></svg>
<!-- wrench -->
<svg class="a" style="left:638px;top:690px" width="16" height="16" viewBox="0 0 16 16"><path d="M2.600 13.400 9.500 6.500" stroke="#424242" stroke-width="2.900" stroke-linecap="round" fill="none"/><path d="M13.030 4.140A2.200 2.200 0 1 1 11.860 2.970" stroke="#424242" stroke-width="4.300" fill="none"/></svg>
</div>

<!-- ===== OVERLAYS ===== -->
<div id="overlay">
<!-- blue image bottom right -->
<div class="a" style="left:908.500px;top:695.500px;width:30px;height:62px;background:#DDE4F2"></div>
<div class="a" style="left:909px;top:696px;width:29px;height:61px;background:#1C368E;overflow:hidden">
<svg class="a" style="left:0;top:0" width="29" height="61" viewBox="0 0 29 61"><rect x="4.8" y="14.5" width="1" height="1" fill="#3E63B5"/><rect x="6.9" y="15.9" width="1" height="1" fill="#3E63B5"/><rect x="11.0" y="3.5" width="1" height="1" fill="#3E63B5"/><rect x="1.2" y="21.3" width="1" height="1" fill="#3E63B5"/><rect x="5.1" y="7.4" width="1" height="1" fill="#3E63B5"/><rect x="16.9" y="12.8" width="1" height="1" fill="#3E63B5"/><rect x="14.4" y="13.0" width="1" height="1" fill="#3E63B5"/><rect x="11.2" y="5.5" width="1" height="1" fill="#3E63B5"/><rect x="11.2" y="22.0" width="1" height="1" fill="#3E63B5"/><rect x="9.4" y="19.0" width="1" height="1" fill="#3E63B5"/><rect x="11.7" y="3.5" width="1" height="1" fill="#3E63B5"/><rect x="13.1" y="15.6" width="1" height="1" fill="#3E63B5"/><rect x="5.8" y="2.7" width="1" height="1" fill="#3E63B5"/><rect x="14.8" y="12.9" width="1" height="1" fill="#3E63B5"/><rect x="12.5" y="22.2" width="1" height="1" fill="#3E63B5"/><rect x="12.4" y="23.2" width="1" height="1" fill="#3E63B5"/><rect x="7.3" y="20.4" width="1" height="1" fill="#3E63B5"/><rect x="8.1" y="23.5" width="1" height="1" fill="#3E63B5"/><rect x="15.1" y="4.2" width="1" height="1" fill="#3E63B5"/><rect x="3.2" y="7.0" width="1" height="1" fill="#3E63B5"/><rect x="16.4" y="12.0" width="1" height="1" fill="#3E63B5"/><rect x="11.0" y="8.9" width="1" height="1" fill="#3E63B5"/><path d="M17.300 37.500C17.500 32 22 26 29 23.500V31.500C24 32.500 20 34 17.300 37.500z" fill="#8E5BD6"/><path d="M19 33.500C22 30 25.500 28 29 26.800" stroke="#EFE8FF" stroke-width="1.600" fill="none"/><path d="M17.500 37.500 19 34" stroke="#B0446A" stroke-width="0.800"/></svg>
</div>
<!-- watermark -->
<div class="a" id="wm" style="left:329px;top:256px;font-size:96px;font-weight:bold;line-height:106px;color:rgba(76,175,80,.27);transform:scaleX(.947);transform-origin:0 0;white-space:nowrap">XSS.is</div>
<!-- arrows -->
<svg class="a" style="left:0;top:0;pointer-events:none" width="938" height="757" viewBox="0 0 938 757">
<path d="M526 283 612.500 194.500" stroke="#FF0A0A" stroke-width="3" stroke-linecap="round"/>
<path d="M621 184.200 614.800 197.200 608.400 191.200z" fill="#FF0A0A"/>
<path d="M512 584 675 689.500" stroke="#00F076" stroke-width="3.100" stroke-linecap="round"/>
<path d="M686.500 695.600 671.600 693.200 676.700 684.900z" fill="#00F076"/>
<!-- cursor -->
<path d="M665.500 691.500v16.500l3.800-3.600 2.600 6 2.400-1-2.600-5.900h5.300z" fill="#fff" stroke="#000" stroke-width="1"/>
</svg>
</div>

</body></html>
